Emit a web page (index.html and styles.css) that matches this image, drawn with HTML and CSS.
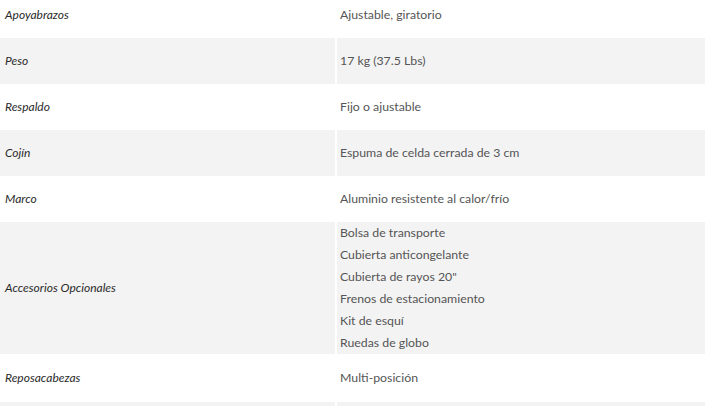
FILE: index.html
```html
<!DOCTYPE html>
<html lang="es">
<head>
<meta charset="utf-8">
<link rel="stylesheet" href="styles.css">
</head>
<body>
<div class="wrap">
<table class="specs">
  <tbody>
    <tr><th>Apoyabrazos</th><td>Ajustable, giratorio</td></tr>
    <tr><th>Peso</th><td>17 kg (37.5 Lbs)</td></tr>
    <tr><th>Respaldo</th><td>Fijo o ajustable</td></tr>
    <tr><th>Cojín</th><td>Espuma de celda cerrada de 3 cm</td></tr>
    <tr><th>Marco</th><td>Aluminio resistente al calor/frío</td></tr>
    <tr><th>Accesorios Opcionales</th><td class="list">
      <ul>
        <li>Bolsa de transporte</li>
        <li>Cubierta anticongelante</li>
        <li>Cubierta de rayos 20"</li>
        <li>Frenos de estacionamiento</li>
        <li>Kit de esquí</li>
        <li>Ruedas de globo</li>
      </ul>
    </td></tr>
    <tr class="tall"><th>Reposacabezas</th><td>Multi-posición</td></tr>
    <tr><th></th><td></td></tr>
  </tbody>
</table>
</div>
</body>
</html>
```
FILE: styles.css
```css
html, body {
  margin: 0;
  padding: 0;
  background: #fff;
  overflow: hidden;
}
.wrap {
  margin-top: -8px;
}
.specs {
  width: 100%;
  border-collapse: collapse;
  font-family: "Lato", "Open Sans", sans-serif;
  line-height: 22px;
}
.specs tr:nth-child(even) {
  background: #f3f3f3;
}
.specs th {
  width: 336px;
  box-sizing: border-box;
  text-align: left;
  font-size: 12px;
  font-weight: 400;
  font-style: italic;
  color: #2a2a2a;
  padding: 12px 5px;
  border-right: 2px solid #fff;
  vertical-align: middle;
}
.specs td {
  font-size: 12.3px;
  color: #555;
  padding: 12px 3px;
  vertical-align: middle;
}
.specs tr.tall th,
.specs tr.tall td {
  padding-top: 13px;
  padding-bottom: 13px;
}
.specs td.list {
  padding: 0 3px;
}
.specs ul {
  list-style: none;
  margin: 0;
  padding: 0;
}
```
